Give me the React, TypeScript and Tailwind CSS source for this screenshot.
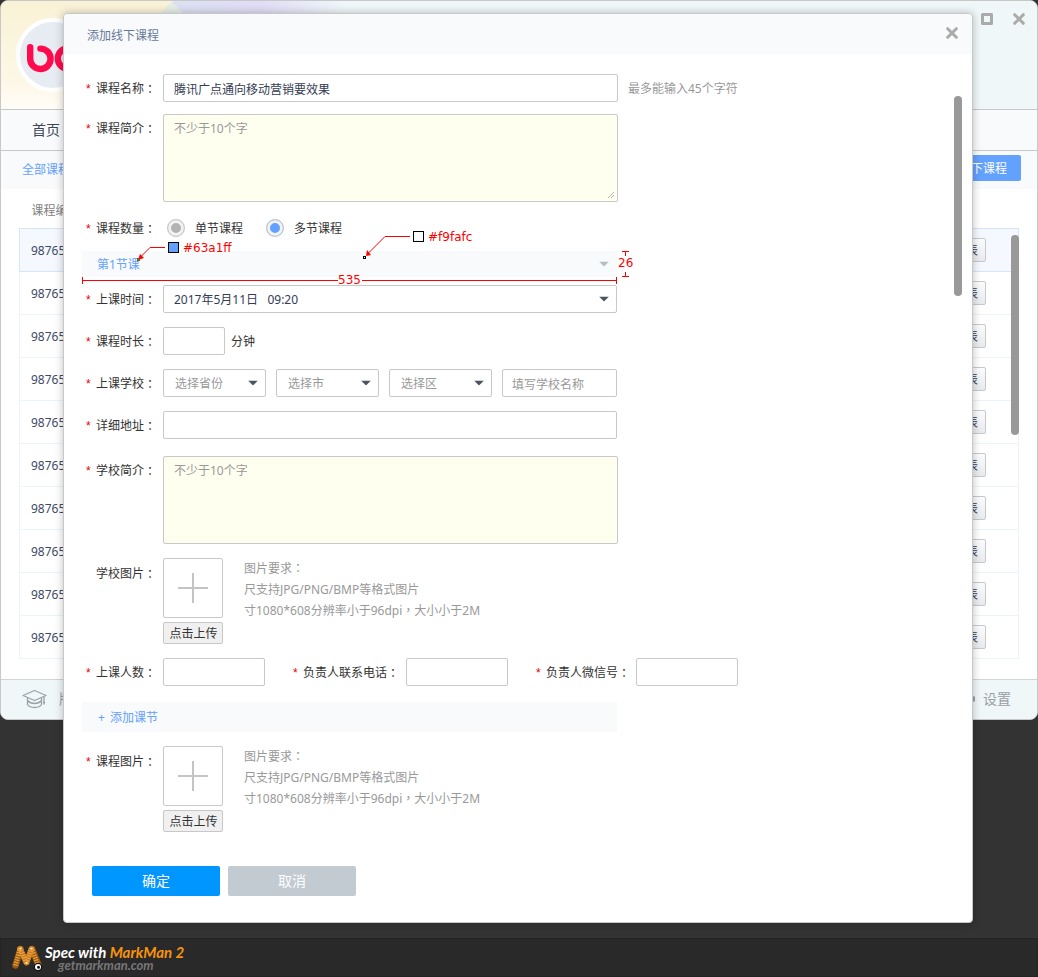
import type { ReactNode } from "react";

const courseIds = Array.from({ length: 10 }, (_, i) => i);
const inputBox =
  "h-7 rounded-xs border border-[#c8c8c8] bg-white pt-[2px] text-[12px] text-[#333c54] placeholder:text-[#999] outline-none";

function CloseIcon() {
  return (
    <svg width="12" height="12" viewBox="0 0 12 12" stroke="#aaa" strokeWidth="3" strokeLinecap="round">
      <path d="M1.7 1.7 10.3 10.3M10.3 1.7 1.7 10.3" />
    </svg>
  );
}

function Wide({ children }: { children: ReactNode }) {
  return <span className="font-['Noto_Sans_CJK_TC',sans-serif] leading-none">{children}</span>;
}

function Label({ text, htmlFor, required = true, className = "h-7 w-[81px] pl-1" }: {
  text: string;
  htmlFor?: string;
  required?: boolean;
  className?: string;
}) {
  return (
    <label htmlFor={htmlFor} className={`flex shrink-0 items-center whitespace-nowrap pt-[2px] text-[#333] ${className}`}>
      <span className="w-[10px] font-['Liberation_Sans',sans-serif] text-[#e60000]">{required ? "*" : ""}</span>
      {text}
      <Wide>：</Wide>
    </label>
  );
}

function Arrow({ color = "#4a5560" }: { color?: string }) {
  return (
    <svg width="10" height="5" viewBox="0 0 10 5" fill={color} className="pointer-events-none absolute right-2 top-1/2 -translate-y-1/2">
      <path d="M0 0H10L5 5Z" />
    </svg>
  );
}

function Select({ id, label, value, box, text }: { id: string; label: string; value: string; box: string; text: string }) {
  return (
    <span className={`relative ${box}`}>
      <select id={id} aria-label={label} className={`${inputBox} w-full appearance-none pr-5 ${text}`}>
        <option>{value}</option>
      </select>
      <Arrow />
    </span>
  );
}

function Upload({ label, required, id }: { label: string; required: boolean; id: string }) {
  return (
    <div className="mt-[14px] flex items-start">
      <Label text={label} required={required} htmlFor={id} className="h-[30px] w-[81px] pl-1" />
      <div className="flex w-[60px] flex-col gap-1">
        <div className="flex h-[60px] items-center justify-center rounded-xs border border-[#c8c8c8]">
          <svg width="30" height="30" viewBox="0 0 30 30" stroke="#c4c4c4" strokeWidth="2">
            <path d="M15 0V30M0 15H30" />
          </svg>
        </div>
        <button type="button" id={id} className="h-[22px] rounded-xs border border-[#c8c8c8] bg-[#f0f0f0] pl-px pt-px text-[12px] leading-5 whitespace-nowrap text-[#333]">
          点击上传
        </button>
      </div>
      <p className="ml-[21px] leading-[21px] text-[#999]">
        图片要求<Wide>：</Wide>
        <br />
        尺支持JPG/PNG/BMP等格式图片
        <br />
        寸1080*608分辨率小于96dpi<Wide>，</Wide>大小小于2M
      </p>
    </div>
  );
}

function Annotations() {
  return (
    <div className="pointer-events-none absolute -top-6 left-0 font-['DejaVu_Sans',sans-serif] text-[12px] leading-4 text-[#f00]">
      <svg width="560" height="60" viewBox="0 0 560 60" fill="none" stroke="#f00">
        <path d="M83 20.500H68L58 30.500" />
        <path d="M56 33 58 27 62 31Z" fill="#f00" stroke="none" />
        <rect x="55.500" y="31.500" width="2" height="2" stroke="#85540c" />
        <rect x="86.500" y="15.500" width="10" height="10" fill="#63a1ff" stroke="#000" />
        <path d="M328 9.500H303L286 26.500" />
        <path d="M284 29 285 23 289 28Z" fill="#f00" stroke="none" />
        <rect x="281.500" y="29.500" width="2" height="2" fill="#fff" stroke="#000" />
        <rect x="331.500" y="4.500" width="10" height="10" fill="#f9fafc" stroke="#000" />
        <path d="M0.500 50V57M0 53.500H256M280 53.500H534M534.500 50V57" />
        <path d="M540 24.500H547M543.500 25V29M540 49.500H547M543.500 45V49" />
      </svg>
      <span className="absolute left-[101px] top-[13px]">#63a1ff</span>
      <span className="absolute left-[346px] top-[2px]">#f9fafc</span>
      <span className="absolute left-[256px] top-[45px]">535</span>
      <span className="absolute left-[536px] top-7">26</span>
    </div>
  );
}

function CourseWindow() {
  return (
    <div className="col-start-1 row-start-1 self-start overflow-hidden rounded-lg border border-[#c8c8c8] bg-white">
      <header className="relative flex h-[109px] items-start justify-between overflow-hidden border-b border-[#c8c8c8] bg-[#eff7f9]">
        <svg className="absolute inset-0 h-full w-[520px]" viewBox="0 0 520 109" preserveAspectRatio="none">
          <defs>
            <linearGradient id="cream" x1="0" y1="0" x2="0" y2="1">
              <stop offset="0" stopColor="#faf2d6" />
              <stop offset="0.75" stopColor="#fdf7e6" />
              <stop offset="1" stopColor="#fffdf8" />
            </linearGradient>
            <linearGradient id="lilac" x1="0" y1="0" x2="1" y2="0">
              <stop offset="0.35" stopColor="#dde0f3" />
              <stop offset="0.5" stopColor="#e1dcf6" />
              <stop offset="0.66" stopColor="#eff7f9" />
            </linearGradient>
          </defs>
          <rect width="520" height="109" fill="url(#lilac)" />
          <path d="M0 0H172L160 12V109H0Z" fill="url(#cream)" />
          <path d="M171 1 182 12V109H160V12Z" fill="#e6eee6" />
        </svg>
        <div className="relative ml-[15px] mt-[17px] flex size-[74px] items-center justify-center rounded-full border-4 border-white bg-[#e7ecf3]">
          <svg width="66" height="66" viewBox="20 22 66 66" fill="none" stroke="#ff0a4d" strokeWidth="6.400" strokeLinecap="round">
            <path d="M30.200 47.300V58.500A10.200 10.200 0 1 0 40.400 48.600" />
            <circle cx="68" cy="58.500" r="10.200" />
          </svg>
        </div>
        <div className="relative flex gap-5 pr-3 pt-3">
          <button aria-label="最大化" className="size-3">
            <svg width="12" height="12" viewBox="0 0 12 12" fill="none" stroke="#aaa" strokeWidth="3" strokeLinejoin="round">
              <rect x="1.500" y="1.500" width="9" height="9" />
            </svg>
          </button>
          <button aria-label="关闭窗口" className="size-3">
            <CloseIcon />
          </button>
        </div>
      </header>
      <nav className="flex h-[41px] items-center border-b border-[#c8c8c8] bg-[#f9fafc] pl-[31px] text-[14px] text-[#3d4757]">
        <a href="#home">首页</a>
      </nav>
      <div className="flex h-[38px] items-center justify-between bg-[#f9fafc] pl-[21px] pr-4">
        <a href="#all" className="text-[#63a1ff]">全部课程</a>
        <button className="mb-1 h-[26px] rounded-xs bg-[#63a1ff] px-[14px] pt-[2px] text-[12px] text-white">添加线下课程</button>
      </div>
      <div className="flex items-start pb-5 pl-[18px] pr-[18px]">
        <table className="w-full border-collapse text-left">
          <thead>
            <tr className="h-[39px] text-[#808080]">
              <th className="pl-3 pt-[6px] font-normal">课程编号</th>
              <th />
            </tr>
          </thead>
          <tbody>
            {courseIds.map((i) => (
              <tr key={i} className={i === 0 ? "h-[43px] border border-[#d4e6fb] bg-[#f5f9ff]" : "h-[43px] border border-[#edf3fb]"}>
                <td className="pl-[11px] pt-[2px] text-[#404a66]">98765</td>
                <td className="pr-8 text-right">
                  <button className="h-6 rounded-xs border border-[#c5c9d2] bg-linear-to-b from-[#fcfcfc] to-[#e9eaec] px-[7px] pt-[2px] align-middle text-[12px] leading-4 text-[#333c54]">
                    列表
                  </button>
                </td>
              </tr>
            ))}
          </tbody>
        </table>
        <div className="-ml-2 mt-[46px] h-[200px] w-2 shrink-0 rounded-full bg-[#999]" />
      </div>
      <footer className="flex h-10 items-center justify-between border-t border-[#d2d5d6] bg-[#eff7f9] pl-[21px] pr-[26px] text-[14px] text-[#999fa5]">
        <span className="flex items-center gap-3">
          <svg width="25" height="20" viewBox="0 0 25 20" fill="none" stroke="#9ba2a8" strokeWidth="1.300" strokeLinejoin="round">
            <path d="M1 6.500 12.500 1.500 24 6.500 12.500 11.500Z" />
            <path d="M5.500 9V15.500C8 19.500 17 19.500 19.500 15.500V9M5.500 11.500C9 15.500 16 15.500 19.500 11.500M22 7.500V15.500M21 13.500H23" />
          </svg>
          版本
        </span>
        <span className="flex items-center gap-2">
          <svg width="14" height="14" viewBox="0 0 14 14" fill="none" stroke="#9ba2a8" strokeWidth="2">
            <circle cx="7" cy="7" r="5" />
            <circle cx="7" cy="7" r="1.500" />
            <path d="M13 4.500V9.500" />
          </svg>
          设置
        </span>
      </footer>
    </div>
  );
}

function CourseDialog() {
  return (
    <section
      role="dialog"
      aria-labelledby="dialog-title"
      className="relative z-10 col-start-1 row-start-1 mb-[15px] ml-[63px] mr-[65px] mt-[13px] rounded-[4px] border border-[#c8c8c8] bg-white shadow-[0_0_8px_rgba(0,0,0,0.25)]"
    >
      <header className="flex h-10 items-center justify-between rounded-t-[4px] bg-[#f9fafc] pl-[23px] pr-[14px]">
        <h1 id="dialog-title" className="pt-1 text-[#66799a]">添加线下课程</h1>
        <button aria-label="关闭" className="mb-[2px] size-3">
          <CloseIcon />
        </button>
      </header>
      <div className="flex items-start justify-between pr-[10px]">
        <form className="pb-[26px] pl-[18px] pt-5">
          <div className="flex items-center">
            <Label text="课程名称" htmlFor="name" />
            <input id="name" defaultValue="腾讯广点通向移动营销要效果" className={`${inputBox} w-[455px] px-[10px]`} />
            <span className="ml-[10px] pt-[2px] text-[#999]">最多能输入45个字符</span>
          </div>
          <div className="mt-3 flex items-start">
            <Label text="课程简介" htmlFor="intro" />
            <div className="relative">
              <textarea id="intro" placeholder="不少于10个字" className="block h-[88px] w-[455px] resize-none rounded-xs border border-[#c8c8c8] bg-[#fffff0] px-[10px] py-[5px] text-[12px] leading-[18px] outline-none placeholder:text-[#999]" />
              <svg width="6" height="6" viewBox="0 0 6 6" stroke="#b5b5b0" className="pointer-events-none absolute bottom-1 right-1">
                <path d="M0 6 6 0M3 6 6 3" />
              </svg>
            </div>
          </div>
          <div className="mt-3 flex items-center text-[#333]">
            <Label text="课程数量" />
            <label className="ml-1 flex items-center gap-[10px]">
              <input type="radio" name="count" className="size-[18px] appearance-none rounded-full border border-[#c8c8c8] bg-[#b3b3b3] shadow-[inset_0_0_0_3px_#f2f2f2] checked:bg-[#63a1ff]" />
              <span className="pt-[2px]">单节课程</span>
            </label>
            <label className="ml-[23px] flex items-center gap-[10px]">
              <input type="radio" name="count" defaultChecked className="size-[18px] appearance-none rounded-full border border-[#c8c8c8] bg-[#b3b3b3] shadow-[inset_0_0_0_3px_#f2f2f2] checked:bg-[#63a1ff]" />
              <span className="pt-[2px]">多节课程</span>
            </label>
          </div>
          <div className="relative mt-[9px] flex h-[26px] w-[535px] items-center bg-[#f9fafc] pl-[15px] pt-[2px] text-[#63a1ff]">
            第1节课
            <Arrow color="#b4bec6" />
            <Annotations />
          </div>
          <div className="mt-2 flex">
            <Label text="上课时间" htmlFor="time" />
            <Select id="time" label="上课时间" value={"2017年5月11日\u00a0\u00a0 09:20"} box="w-[454px]" text="pl-[10px] text-[#333]" />
          </div>
          <div className="mt-[14px] flex items-center">
            <Label text="课程时长" htmlFor="duration" />
            <input id="duration" className={`${inputBox} w-[62px] px-2`} />
            <span className="ml-[6px] pt-[2px] text-[#333]">分钟</span>
          </div>
          <div className="mt-[14px] flex">
            <Label text="上课学校" htmlFor="province" />
            <div className="flex gap-[10px]">
              <Select id="province" label="选择省份" value="选择省份" box="w-[103px]" text="pl-[11px] text-[#999]" />
              <Select id="city" label="选择市" value="选择市" box="w-[103px]" text="pl-[11px] text-[#999]" />
              <Select id="district" label="选择区" value="选择区" box="w-[103px]" text="pl-[11px] text-[#999]" />
              <input aria-label="填写学校名称" placeholder="填写学校名称" className={`${inputBox} w-[115px] px-[9px]`} />
            </div>
          </div>
          <div className="mt-[14px] flex">
            <Label text="详细地址" htmlFor="address" />
            <input id="address" className={`${inputBox} w-[454px] px-[10px]`} />
          </div>
          <div className="mt-[17px] flex items-start">
            <Label text="学校简介" htmlFor="school" />
            <textarea id="school" placeholder="不少于10个字" className="block h-[88px] w-[455px] resize-none rounded-xs border border-[#c8c8c8] bg-[#fffff0] px-[10px] py-[5px] text-[12px] leading-[18px] outline-none placeholder:text-[#999]" />
          </div>
          <Upload id="school-image" label="学校图片" required={false} />
          <div className="mt-[14px] flex">
            <Label text="上课人数" htmlFor="people" />
            <input id="people" className={`${inputBox} w-[102px] px-2`} />
            <Label text="负责人联系电话" htmlFor="phone" className="ml-7 h-7 w-[113px]" />
            <input id="phone" className={`${inputBox} w-[102px] px-2`} />
            <Label text="负责人微信号" htmlFor="wechat" className="ml-7 h-7 w-[100px]" />
            <input id="wechat" className={`${inputBox} w-[102px] px-2`} />
          </div>
          <button type="button" className="mt-4 flex h-[30px] w-[535px] items-center gap-[5px] bg-[#f9fafc] pl-4 pt-[2px] text-[12px] text-[#63a1ff]">
            <span>+</span>
            <span>添加课节</span>
          </button>
          <Upload id="course-image" label="课程图片" required />
          <div className="mt-[34px] flex gap-2 pl-[10px] text-[14px] text-white">
            <button type="button" className="h-[30px] w-32 rounded-xs bg-[#0096ff]">确定</button>
            <button type="button" className="h-[30px] w-32 rounded-xs bg-[#c2cad2]">取消</button>
          </div>
        </form>
        <div className="mt-[42px] h-[200px] w-2 shrink-0 rounded-full bg-[#999]" />
      </div>
    </section>
  );
}

function SpecFooter() {
  return (
    <footer className="mt-auto flex h-[39px] items-center gap-[2px] border border-[#242424] bg-[#292929] pl-[10px] font-['Lato',sans-serif] font-bold italic">
      <svg width="32" height="28" viewBox="0 0 32 28" fill="none" strokeLinecap="round">
        <g stroke="#9a5a12" strokeWidth="6.500">
          <path d="M4.500 21.500 9.500 5M21 5 27.500 21" />
        </g>
        <g stroke="#c97a1f" strokeWidth="6">
          <path d="M9 5 15.500 18.500M15.500 18.500 20.500 5" />
        </g>
        <g stroke="#e8a23f" strokeWidth="4.500" strokeDasharray="1.200 1.300" strokeLinecap="butt">
          <path d="M4.500 21.500 9 4M9 4 15.500 19.500M15.500 19.500 20.500 4M20.500 4 27 21" />
        </g>
        <circle cx="9.500" cy="4.500" r="1" fill="#fff0c8" />
        <circle cx="20.500" cy="4.500" r="1" fill="#fff0c8" />
        <circle cx="15.500" cy="19" r="1" fill="#fff0c8" />
        <circle cx="27" cy="23" r="4.200" fill="#111" />
        <circle cx="27" cy="23" r="3" fill="#fff" />
        <circle cx="27.500" cy="23.300" r="1.500" fill="#111" />
      </svg>
      <div>
        <p className="text-[15px] leading-[14px] text-white">
          Spec with <span className="text-[#f7930d]">MarkMan 2</span>
        </p>
        <p className="pl-[13px] text-[13px] leading-3 text-[#777]">getmarkman.com</p>
      </div>
    </footer>
  );
}

export default function App() {
  return (
    <div className="flex min-h-screen flex-col bg-[#333] font-['Noto_Sans','Noto_Sans_CJK_SC',sans-serif] text-[12px] leading-[18px]">
      <main className="grid">
        <CourseWindow />
        <CourseDialog />
      </main>
      <SpecFooter />
    </div>
  );
}
